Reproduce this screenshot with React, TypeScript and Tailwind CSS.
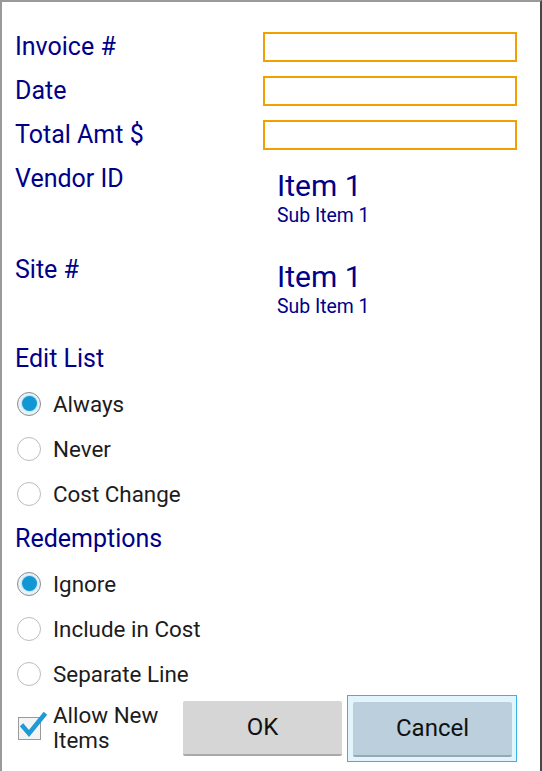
import React from 'react';

const font = { fontFamily: 'Roboto, "Noto Sans", sans-serif' };

function Radio({ label, checked }: { label: string; checked?: boolean }) {
  return (
    <div className="flex h-[45px] items-center">
      <div
        className={
          checked
            ? 'ml-[2px] flex h-[24px] w-[24px] items-center justify-center rounded-full border-[1.5px] border-[#8c8c8c] bg-[#e6f3fa]'
            : 'ml-[2px] h-[24px] w-[24px] rounded-full border-[1.5px] border-[#bcbcbc] bg-white'
        }
      >
        {checked && <div className="h-[15px] w-[15px] rounded-full bg-[#1197d4] ring-1 ring-[#bfe3f3]" />}
      </div>
      <span className="ml-[12px] text-[22.4px] leading-[26px] text-[#1c1c1c]">{label}</span>
    </div>
  );
}

function FieldRow({ label }: { label: string }) {
  return (
    <div className="flex h-[44px] items-start">
      <div className="w-[248px] text-[25px] leading-[30px] text-[#000088]">{label}</div>
      <div className="h-[30px] w-[254px] border-2 border-[#f0a000] bg-white" />
    </div>
  );
}

function PickRow({ label, h }: { label: string; h: string }) {
  return (
    <div className={`flex items-start ${h}`}>
      <div className="w-[262px] text-[25px] leading-[30px] text-[#000088]">{label}</div>
      <div className="mt-[4px] flex flex-col text-[#000088]">
        <span className="text-[30px] leading-[36px]">Item 1</span>
        <span className="mt-[1px] text-[19.4px] leading-[22px]">Sub Item 1</span>
      </div>
    </div>
  );
}

export default function App() {
  return (
    <div
      className="h-[771px] w-[542px] overflow-hidden border-l-2 border-t-2 border-r-2 border-l-[#9a9a9a] border-t-[#9a9a9a] border-r-[#474747] bg-white"
      style={font}
    >
      <div className="flex flex-col pl-[13px] pt-[30px]">
        <FieldRow label="Invoice #" />
        <FieldRow label="Date" />
        <FieldRow label="Total Amt $" />
        <PickRow label="Vendor ID" h="h-[91px]" />
        <PickRow label="Site #" h="h-[81px]" />

        <div className="flex h-[45px] items-center text-[25px] text-[#000088]">Edit List</div>
        <Radio label="Always" checked />
        <Radio label="Never" />
        <Radio label="Cost Change" />

        <div className="flex h-[45px] items-center text-[25px] text-[#000088]">Redemptions</div>
        <Radio label="Ignore" checked />
        <Radio label="Include in Cost" />
        <Radio label="Separate Line" />

        <div className="flex h-[64px] items-center">
          <div className="flex w-[168px] items-center">
            <div className="relative ml-[3px] h-[23px] w-[23px] border border-[#9a9a9a] bg-[#f4f4f4]">
              <svg className="absolute -left-[1px] -top-[13px]" width="30" height="36" viewBox="0 0 30 36">
                <path d="M5 21.5 L11 28.5 L26 10" fill="none" stroke="#1e9ad6" strokeWidth="4.5" strokeLinecap="square" />
              </svg>
            </div>
            <div className="ml-[12px] text-[22.4px] leading-[25px] text-[#1c1c1c]">
              Allow New
              <br />
              Items
            </div>
          </div>
          <button className="h-[55px] w-[159px] rounded-[2px] border-b-2 border-[#a9a9a9] bg-[#d6d6d6] text-[24px] text-[#111]">
            OK
          </button>
          <div className="ml-[5px] border border-[#33b5e5] bg-[#e2f4fc] pb-[4px] pl-[5px] pr-[4px] pt-[6px]">
            <button className="block h-[55px] w-[159px] rounded-[2px] border-b-2 border-[#97a8b3] bg-[#bccfdc] text-[24px] text-[#111]">
              Cancel
            </button>
          </div>
        </div>
      </div>
    </div>
  );
}
